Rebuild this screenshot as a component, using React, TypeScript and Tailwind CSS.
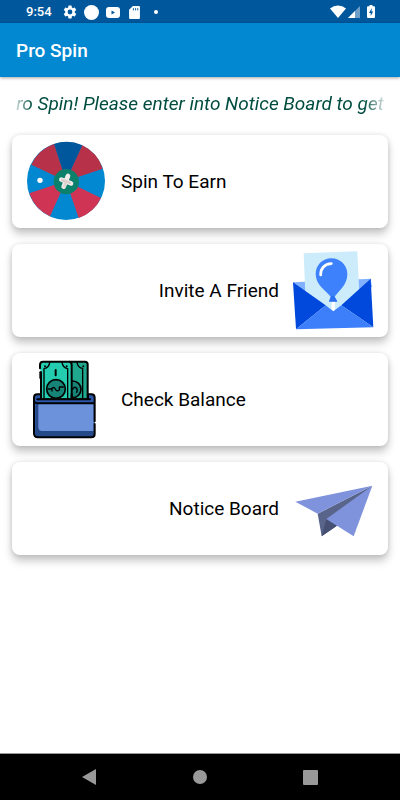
import React from "react";
import clsx from "clsx";

interface MenuItem {
  id: string;
  label: string;
  icon: React.ReactNode;
  reverse?: boolean;
}

function WheelIcon() {
  return (
    <svg viewBox="48 36 240 237" className="h-[79px] w-20 shrink-0 overflow-visible" aria-hidden="true">
      <circle cx="168" cy="153" r="117" fill="#0288d1" />
      <path d="M168 153L132 42A117 117 0 0 1 217 46Z" fill="#01579b" />
      <path d="M168 153L217 46A117 117 0 0 1 278 116Z" fill="#b73148" />
      <path d="M168 153L64 104A117 117 0 0 1 132 42Z" fill="#b73148" />
      <path d="M168 153L273 204A117 117 0 0 1 206 264Z" fill="#d03454" />
      <path d="M168 153L120 259A117 117 0 0 1 58 190Z" fill="#d03454" />
      <circle cx="169" cy="155" r="38" fill="#0b806a" />
      <g strokeLinecap="round" strokeWidth="14" fill="none">
        <path d="M154 149L183 160" stroke="#f1ecea" />
        <path d="M174 138L161 170" stroke="#f1ecea" />
        <path d="M157 151L168 154" stroke="#d8cfcd" strokeWidth="9" />
        <path d="M168 155L163 168" stroke="#ded6d3" strokeWidth="8" />
        <path d="M170 155L180 159" stroke="#d8cfcd" strokeWidth="7" />
      </g>
      <circle cx="90" cy="151" r="8" fill="#fff" />
    </svg>
  );
}

function EnvelopeIcon() {
  return (
    <svg viewBox="42 32 240 237" className="h-[79px] w-20 shrink-0 overflow-visible" aria-hidden="true">
      <path d="M39 126L272 115L276 140L160 215L42 140Z" fill="#82b1ff" />
      <path d="M71 39L232 33L239 180L160 216L77 185Z" fill="#cdecfb" />
      <path d="M155 182H165V214H155Z" fill="#fff" />
      <path
        d="M154 54C127 54 107 75 107 101C107 134 136 149 153 170L147 183H172L163 170C177 151 202 134 202 101C202 75 181 54 154 54Z"
        fill="#3d82fc"
      />
      <path d="M153 167L147 184H172L163 167Z" fill="#2a72f2" />
      <path d="M122 104C121 84 134 71 154 70" fill="none" stroke="#fff" strokeWidth="8" strokeLinecap="round" />
      <path d="M39 126L137 195L48 267Z" fill="#0049dc" />
      <path d="M272 115L280 261L184 195Z" fill="#0049dc" />
      <path d="M137 195L160 213L184 195L280 261L48 267Z" fill="#3d7ffb" />
    </svg>
  );
}

function WalletIcon() {
  return (
    <svg viewBox="50 30 240 237" className="h-[79px] w-20 shrink-0 overflow-visible" aria-hidden="true">
      <g stroke="#000" strokeWidth="6" strokeLinecap="round" strokeLinejoin="round">
        <path d="M180 35H227Q235 35 235 43V148H180Z" fill="#20a88f" />
        <path d="M203 37Q206 54 220 55V148" fill="none" strokeWidth="4" />
        <circle cx="190" cy="118" r="25" fill="#168577" strokeWidth="5" />
        <path d="M92 55V45Q92 35 101 35H178Q187 35 187 44V148H95V67" fill="#25cdb0" />
        <path d="M93 67V84" fill="none" />
        <path d="M121 37Q120 52 104 56V148M158 37Q160 52 175 56V148" fill="none" strokeWidth="4" />
        <circle cx="140" cy="117" r="28" fill="#168577" strokeWidth="5" />
        <path d="M139 60V76" fill="none" />
        <path d="M117 117H126Q133 108 138 117Q142 126 150 120V111H162M128 117V123" fill="none" strokeWidth="4" />
        <path d="M190 118Q195 108 201 114Q206 119 202 127" fill="none" strokeWidth="4" />
      </g>
      <circle cx="107" cy="49" r="3" fill="#000" />
      <circle cx="172" cy="49" r="3" fill="#000" />
      <circle cx="222" cy="49" r="3" fill="#000" />
      <path d="M74 143Q74 133 84 133H92V146H238V133H246Q256 133 256 143V252Q256 262 246 262H86Q74 262 74 250Z" fill="#2c57a8" />
      <path d="M79 160H253V250Q253 258 246 258H88Q79 258 79 250Z" fill="#254987" />
      <path d="M87 160H253V243H98Q87 243 87 232Z" fill="#6c92dc" />
      <path
        d="M92 133H84Q74 133 74 143V250Q74 262 86 262H246Q256 262 256 252V222M256 214V143Q256 133 246 133H238M76 156Q79 160 86 160H256M84 148H242M95 132V147M187 132V147M236 132V147"
        fill="none"
        stroke="#000"
        strokeWidth="6"
        strokeLinecap="round"
      />
    </svg>
  );
}

function PlaneIcon() {
  return (
    <svg viewBox="43 26 240 237" className="h-[79px] w-20 shrink-0 overflow-visible" aria-hidden="true">
      <path d="M278 76L114 160L126 228L172 196Z" fill="#58648a" />
      <path d="M140 177L126 228L172 196Z" fill="#465073" />
      <path d="M47 124L278 76L114 160Z" fill="#7f93dc" />
      <path d="M278 76L140 176L222 228Z" fill="#7f93dc" />
    </svg>
  );
}

const menuItems: MenuItem[] = [
  { id: "spin", label: "Spin To Earn", icon: <WheelIcon /> },
  { id: "invite", label: "Invite A Friend", icon: <EnvelopeIcon />, reverse: true },
  { id: "balance", label: "Check Balance", icon: <WalletIcon /> },
  { id: "notice", label: "Notice Board", icon: <PlaneIcon />, reverse: true }
];

function StatusBar() {
  return (
    <div className="flex h-[23px] items-center justify-between bg-[#01579b] pr-[25px] pl-[26px] text-white">
      <div className="flex items-center">
        <span className="w-9 text-[13px] leading-none font-medium">9:54</span>
        {/* Settings */}
        <svg viewBox="0 0 24 24" className="mt-px size-4" fill="currentColor" aria-hidden="true">
          <path d="M19.14 12.94c.04-.3.06-.61.06-.94s-.02-.64-.07-.94l2.03-1.58a.49.49 0 0 0 .12-.61l-1.92-3.32a.49.49 0 0 0-.59-.22l-2.39.96a7 7 0 0 0-1.62-.94l-.36-2.54a.48.48 0 0 0-.48-.41h-3.84a.47.47 0 0 0-.47.41l-.36 2.54c-.59.24-1.13.57-1.62.94l-2.39-.96a.47.47 0 0 0-.59.22L2.74 8.87a.47.47 0 0 0 .12.61l2.03 1.58a6 6 0 0 0-.02 1.88l-2.03 1.58a.49.49 0 0 0-.12.61l1.92 3.32c.12.22.37.29.59.22l2.39-.96c.5.38 1.03.7 1.62.94l.36 2.54c.05.24.24.41.48.41h3.84c.24 0 .44-.17.47-.41l.36-2.54a6.6 6.6 0 0 0 1.62-.94l2.39.96c.22.08.47 0 .59-.22l1.92-3.32a.47.47 0 0 0-.12-.61zM12 15.6a3.6 3.6 0 1 1 0-7.2 3.6 3.6 0 0 1 0 7.2" />
        </svg>
        <span className="mt-px ml-[6px] size-[15px] rounded-full bg-white" />
        {/* Video */}
        <svg viewBox="0 0 14 12" className="mt-px ml-[7px] h-3 w-[14px]" aria-hidden="true">
          <rect width="14" height="11" y="1" rx="3" fill="#fff" />
          <path d="M5.5 4.5L9 6.5L5.5 8.5Z" fill="#01579b" />
        </svg>
        {/* SD card */}
        <svg viewBox="0 0 10 12" className="mt-px ml-[9px] h-[13px] w-[11px]" aria-hidden="true">
          <path d="M3.5 0H9Q10 0 10 1V11Q10 12 9 12H1Q0 12 0 11V3.5Z" fill="#fff" />
          <path d="M4 2V4M6 2V4M8 2V4" stroke="#01579b" strokeWidth="0.9" />
        </svg>
        <span className="ml-[14px] size-1 rounded-full bg-white" />
      </div>
      <div className="flex items-center">
        <svg viewBox="0 0 16 13" className="h-[13px] w-4" fill="#fff" aria-hidden="true">
          <path d="M8 13L0 3.5Q3.5 0.5 8 0.5T16 3.5Z" />
        </svg>
        <svg viewBox="0 0 12 12" className="mt-px ml-[2px] h-3 w-3" aria-hidden="true">
          <path d="M12 0V12H0Z" fill="#6f9fc8" />
          <path d="M7 5V12H0Z" fill="#fff" />
        </svg>
        <svg viewBox="0 0 8 13" className="ml-[7px] h-[13px] w-2" aria-hidden="true">
          <path d="M2.5 0H5.5V1.3H7Q8 1.3 8 2.3V12Q8 13 7 13H1Q0 13 0 12V2.3Q0 1.3 1 1.3H2.5Z" fill="#fff" />
          <path d="M4.8 3L2 8H3.7V11L6.2 6.5H4.5Z" fill="#01579b" />
        </svg>
      </div>
    </div>
  );
}

function MenuCard({ item }: { item: MenuItem }) {
  return (
    <button
      type="button"
      className={clsx(
        "flex items-center gap-[15px] rounded-lg bg-white px-[14px] py-[7px] text-[19px] text-black shadow-[0_6px_8px_rgba(0,0,0,0.22),0_0_5px_rgba(0,0,0,0.12)]",
        item.reverse && "flex-row-reverse"
      )}
    >
      {item.icon}
      <span className="pt-[2px]">{item.label}</span>
    </button>
  );
}

function NavBar() {
  return (
    <nav className="flex h-[47px] items-center justify-around border-t border-[#999] bg-black px-[34px] text-[#999]">
      <button type="button" aria-label="Back" className="flex w-12 justify-center">
        <svg viewBox="0 0 14 16" className="h-4 w-[14px]" fill="currentColor" aria-hidden="true">
          <path d="M14 0V16L0 8Z" />
        </svg>
      </button>
      <button type="button" aria-label="Home" className="flex w-12 justify-center">
        <span className="size-[14px] rounded-full bg-current" />
      </button>
      <button type="button" aria-label="Recent apps" className="flex w-12 justify-center">
        <span className="size-[15px] rounded-[1px] bg-current" />
      </button>
    </nav>
  );
}

export default function App() {
  return (
    <div className="flex min-h-screen flex-col bg-white font-[Roboto,sans-serif]">
      <StatusBar />
      <header className="flex h-[54px] items-center bg-[#0288d1] px-4 pt-[2px] shadow-[0_1px_3px_rgba(0,0,0,0.35)]">
        <h1 className="text-[19px] font-medium text-white">Pro Spin</h1>
      </header>

      <main className="flex flex-1 flex-col px-3 pt-[13px]">
        <p className="mb-[17px] overflow-hidden text-center text-[19px]/7 whitespace-nowrap text-[#004d40] italic [mask-image:linear-gradient(to_right,transparent,black_20px,black_calc(100%-24px),transparent)]">
          ro Spin! Please enter into Notice Board to get
        </p>
        <div className="flex flex-col gap-4">
          {menuItems.map((item) => (
            <MenuCard key={item.id} item={item} />
          ))}
        </div>
      </main>

      <NavBar />
    </div>
  );
}
